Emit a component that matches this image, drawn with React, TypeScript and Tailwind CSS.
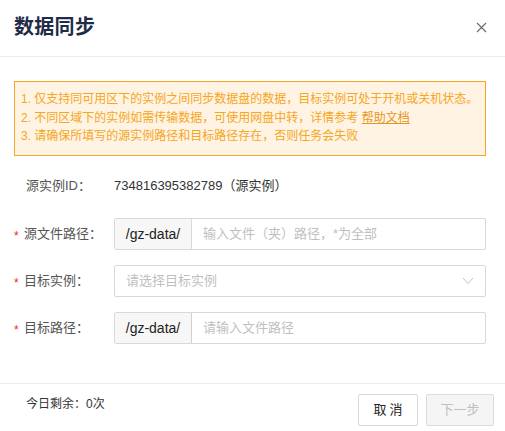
import React from 'react'

const font = { fontFamily: '"Liberation Sans", "Noto Sans CJK SC", sans-serif' }

function Label({ text, required }: { text: string; required?: boolean }) {
  return (
    <div className="w-[100px] shrink-0 flex items-center text-[13px] text-[#555]">
      {required && <span className="w-[10px] text-[#f5222d] text-[12px] leading-none pt-[3px]">*</span>}
      <span>{text}</span>
    </div>
  )
}

export default function App() {
  return (
    <div className="w-[505px] h-[431px] bg-white flex flex-col overflow-hidden" style={font}>
      {/* Header */}
      <div className="h-[57px] shrink-0 flex items-center justify-between pl-[14px] pr-[18px] border-b border-[#ebebeb]">
        <div className="text-[20px] font-bold text-[#1f2b48] tracking-[0.3px] pb-[2px]">数据同步</div>
        <svg width="11" height="11" viewBox="0 0 11 11" className="mb-[2px]">
          <path d="M1 1 L10 10 M10 1 L1 10" stroke="#6b6b78" strokeWidth="1.2" fill="none" />
        </svg>
      </div>

      {/* Body */}
      <div className="flex flex-col pl-[14px] pr-[19px] pt-[24px]">
        <div className="h-[75px] border border-[#f5a623] bg-[#fff4e4] px-[6px] pt-[8px] text-[12px] leading-[18.5px] text-[#f5a623]">
          <div>1. 仅支持同可用区下的实例之间同步数据盘的数据，目标实例可处于开机或关机状态。</div>
          <div>
            2. 不同区域下的实例如需传输数据，可使用网盘中转，详情参考{' '}
            <span className="underline text-[#e8951a]">帮助文档</span>
          </div>
          <div>3. 请确保所填写的源实例路径和目标路径存在，否则任务会失败</div>
        </div>

        <div className="flex items-center h-[20px] mt-[20px] text-[13px]">
          <div className="w-[100px] pl-[12px] text-[#555]">源实例ID：</div>
          <div className="text-[#333]">734816395382789（源实例）</div>
        </div>

        <div className="flex flex-col gap-[15px] mt-[22px]">
          <div className="flex h-[32px]">
            <Label text="源文件路径：" required />
            <div className="flex flex-1 border border-[#d9d9d9] rounded-[2px] overflow-hidden text-[13px]">
              <div className="w-[77px] shrink-0 bg-[#f7f7f7] border-r border-[#d9d9d9] flex items-center justify-center text-[14px] text-[#222]">
                /gz-data/
              </div>
              <div className="flex-1 flex items-center pl-[11px] text-[#bfbfbf]">输入文件（夹）路径，*为全部</div>
            </div>
          </div>

          <div className="flex h-[32px]">
            <Label text="目标实例：" required />
            <div className="flex flex-1 items-center justify-between border border-[#d9d9d9] rounded-[2px] pl-[11px] pr-[11px] text-[13px] text-[#bfbfbf]">
              <span>请选择目标实例</span>
              <svg width="12" height="8" viewBox="0 0 12 8">
                <path d="M1 1 L6 6.5 L11 1" stroke="#c4c4c4" strokeWidth="1" fill="none" />
              </svg>
            </div>
          </div>

          <div className="flex h-[32px]">
            <Label text="目标路径：" required />
            <div className="flex flex-1 border border-[#d9d9d9] rounded-[2px] overflow-hidden text-[13px]">
              <div className="w-[77px] shrink-0 bg-[#f7f7f7] border-r border-[#d9cdc9] flex items-center justify-center text-[14px] text-[#222]">
                /gz-data/
              </div>
              <div className="flex-1 flex items-center pl-[11px] text-[#bfbfbf] border border-l-0 border-[#dccfcb] -my-px -mr-px">
                请输入文件路径
              </div>
            </div>
          </div>
        </div>
      </div>

      {/* Footer */}
      <div className="mt-[39px] border-t border-[#ebebeb] flex items-start justify-between pl-[26px] pr-[11px] pt-[10px]">
        <div className="text-[12px] text-[#333] mt-[1px]">今日剩余：0次</div>
        <div className="flex gap-[8px]">
          <button className="w-[60px] h-[32px] border border-[#d9d9d9] rounded-[2px] bg-white text-[13px] text-[#222] tracking-[3px] pl-[3px]">
            取消
          </button>
          <button className="w-[68px] h-[32px] border border-[#dcdcdc] rounded-[2px] bg-[#f5f5f5] text-[13px] text-[#c0c0c0]">
            下一步
          </button>
        </div>
      </div>
    </div>
  )
}
